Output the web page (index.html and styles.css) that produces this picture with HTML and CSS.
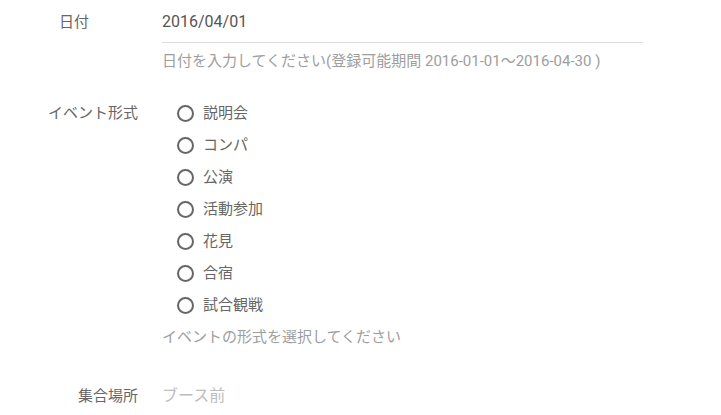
FILE: index.html
```html
<!DOCTYPE html>
<html lang="ja">
<head>
<meta charset="utf-8">
<link rel="stylesheet" href="styles.css">
</head>
<body>
<form class="form">
  <div class="row row-date">
    <div class="label label-date">日付</div>
    <div class="field">
      <div class="input">2016/04/01</div>
      <div class="helper">日付を入力してください(登録可能期間 2016-01-01～2016-04-30 )</div>
    </div>
  </div>
  <div class="row row-event">
    <div class="label">イベント形式</div>
    <div class="field">
      <ul class="radios">
        <li class="radio"><span class="circle"></span><span>説明会</span></li>
        <li class="radio"><span class="circle"></span><span>コンパ</span></li>
        <li class="radio"><span class="circle"></span><span>公演</span></li>
        <li class="radio"><span class="circle"></span><span>活動参加</span></li>
        <li class="radio"><span class="circle"></span><span>花見</span></li>
        <li class="radio"><span class="circle"></span><span>合宿</span></li>
        <li class="radio"><span class="circle"></span><span>試合観戦</span></li>
      </ul>
      <div class="helper helper-event">イベントの形式を選択してください</div>
    </div>
  </div>
  <div class="row row-place">
    <div class="label">集合場所</div>
    <div class="field">
      <div class="placeholder">ブース前</div>
    </div>
  </div>
</form>
</body>
</html>
```
FILE: styles.css
```css
html, body {
  margin: 0;
  padding: 0;
  background: #ffffff;
}
body {
  font-family: Roboto, "Noto Sans CJK JP", sans-serif;
  font-size: 15px;
  line-height: 20px;
  color: #555555;
}
.form {
  display: flex;
  flex-direction: column;
}
.row {
  display: grid;
  grid-template-columns: 138px 481px;
  column-gap: 24px;
}
.label {
  text-align: right;
  color: #666666;
  font-size: 15px;
}
.label-date {
  padding-right: 49px;
}
.row-date {
  padding-top: 12px;
}
.input {
  font-size: 16px;
  color: #555555;
  padding-bottom: 10px;
  border-bottom: 1px solid #dcdcdc;
}
.helper {
  font-size: 15px;
  color: #9e9e9e;
  margin-top: 8px;
  white-space: nowrap;
}
.row-event {
  margin-top: 26px;
}
.row-event .label {
  padding-top: 6px;
}
.radios {
  list-style: none;
  margin: 0;
  padding: 0 0 0 15px;
}
.radio {
  display: flex;
  align-items: center;
  height: 32px;
  color: #666666;
}
.circle {
  box-sizing: border-box;
  width: 17px;
  height: 17px;
  border: 2px solid #666666;
  border-radius: 50%;
  margin-right: 9px;
}
.helper-event {
  margin-top: 0;
  line-height: 32px;
}
.row-place {
  margin-top: 33px;
}
.placeholder {
  color: #bdbdbd;
  font-size: 16px;
}
```
